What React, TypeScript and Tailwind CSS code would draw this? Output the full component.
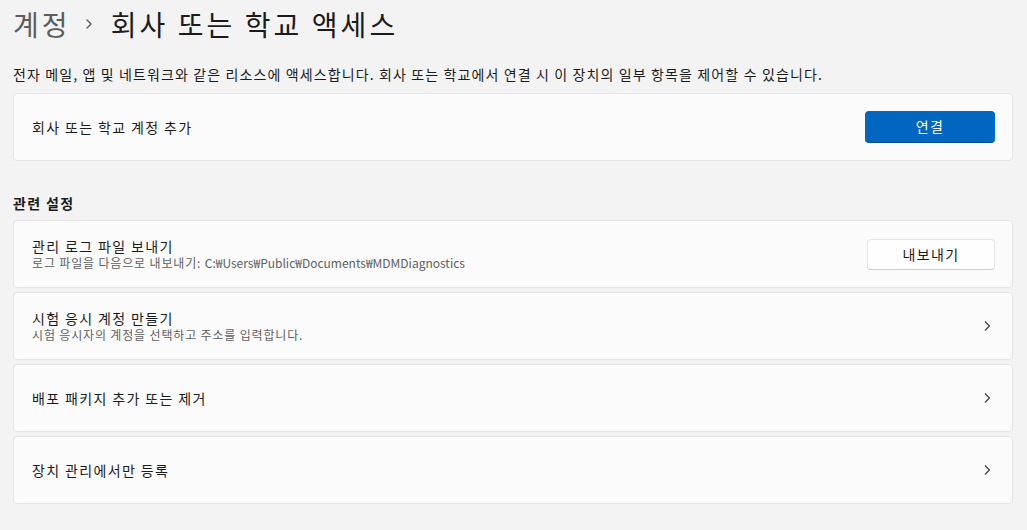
import { ChevronRight } from "lucide-react";

const font = { fontFamily: '"Noto Sans CJK KR", "Noto Sans", sans-serif' };

function Chevron() {
  return (
    <svg width="16" height="16" viewBox="0 0 16 16" className="text-[#333]">
      <path d="M6 3.5 L10.5 8 L6 12.5" fill="none" stroke="currentColor" strokeWidth="1.1" />
    </svg>
  );
}

function Row({ title, sub, right }: { title: string; sub?: React.ReactNode; right?: React.ReactNode }) {
  return (
    <div className="flex h-[68px] items-center justify-between rounded-[4px] border border-[#e5e5e5] bg-[#fbfbfb] pl-[18px] pr-[17px]">
      <div className="flex flex-col">
        <span className="text-[14px] leading-[18px] text-[#1b1b1b]">{title}</span>
        {sub ? <span className="text-[12px] leading-[16px] tracking-[0.07em] text-[#5f5f5f]">{sub}</span> : null}
      </div>
      {right}
    </div>
  );
}

export default function App() {
  return (
    <div style={font} className="h-[530px] w-[1027px] overflow-hidden bg-[#f3f3f3] pl-[13px] pr-[14px] tracking-[0.085em]">
      <h1 className="flex items-center pt-[4px] text-[28px] leading-[40px] tracking-[0.11em] text-[#1b1b1b]">
        <span className="text-[#5d5d5d]">계정</span>
        <ChevronRight className="ml-[10px] mr-[14px] h-[16px] w-[16px] text-[#5d5d5d]" strokeWidth={2} />
        <span>회사 또는 학교 액세스</span>
      </h1>
      <p className="mt-[21px] text-[14px] leading-[18px] tracking-[0.08em] text-[#1b1b1b]">
        전자 메일, 앱 및 네트워크와 같은 리소스에 액세스합니다. 회사 또는 학교에서 연결 시 이 장치의 일부 항목을 제어할 수 있습니다.
      </p>
      <div className="mt-[10px]">
        <Row
          title="회사 또는 학교 계정 추가"
          right={
            <button className="h-[32px] w-[130px] rounded-[4px] border-b border-[#0a4f91] bg-[#0067c0] text-[14px] text-white">
              연결
            </button>
          }
        />
      </div>
      <h2 className="mt-[33px] text-[14px] font-semibold leading-[18px] text-[#1b1b1b]">관련 설정</h2>
      <div className="mt-[8px] flex flex-col gap-[4px]">
        <Row
          title="관리 로그 파일 보내기"
          sub={
            <>
              로그 파일을 다음으로 내보내기:{" "}
              <span className="tracking-[0em]">C:₩Users₩Public₩Documents₩MDMDiagnostics</span>
            </>
          }
          right={
            <button className="h-[31px] w-[128px] rounded-[4px] border border-[#e5e5e5] border-b-[#cccccc] bg-[#fefefe] text-[14px] text-[#1b1b1b]">
              내보내기
            </button>
          }
        />
        <Row title="시험 응시 계정 만들기" sub="시험 응시자의 계정을 선택하고 주소를 입력합니다." right={<Chevron />} />
        <Row title="배포 패키지 추가 또는 제거" right={<Chevron />} />
        <Row title="장치 관리에서만 등록" right={<Chevron />} />
      </div>
    </div>
  );
}
